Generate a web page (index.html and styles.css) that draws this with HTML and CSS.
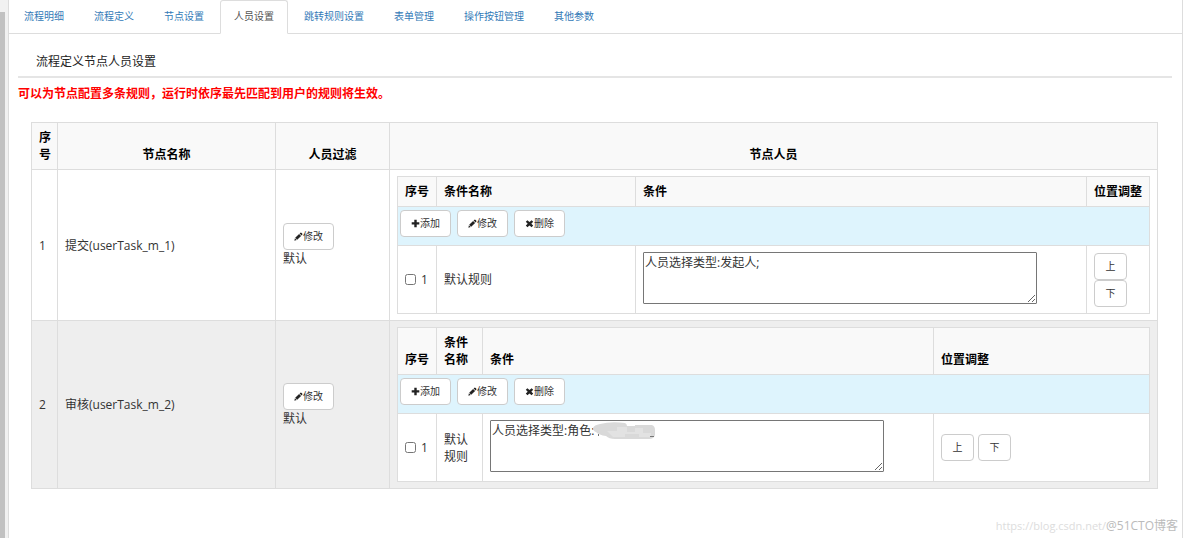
FILE: index.html
```html
<!DOCTYPE html>
<html lang="zh-CN">
<head>
<meta charset="utf-8">
<title>流程定义节点人员设置</title>
<link rel="stylesheet" href="styles.css">
</head>
<body>
<svg class="sprite" aria-hidden="true">
  <symbol id="i-plus" viewBox="0 0 9 9"><path d="M3.3.8h2.4v2.5h2.6v2.3H5.7v2.6H3.3V5.6H.7V3.3h2.6z"/></symbol>
  <symbol id="i-pencil" viewBox="0 0 9 9"><path d="M6.2.9q.7-.7 1.4 0l.6.6q.6.7 0 1.3l-.6.6-2-2zM5.1 1.9l2 2-3.9 3.9-2-2zM.9 6.3l1.8 1.8-2.3.6z"/></symbol>
  <symbol id="i-remove" viewBox="0 0 9 9"><path d="M2.4 1.2l2.1 1.800 2.1-1.800 1.600 1.600-1.900 1.900 1.900 1.900-1.600 1.600-2.100-1.800-2.100 1.800L.8 6.600l1.900-1.900L.8 2.800z"/></symbol>
</svg>
<div class="frame">
  <div class="gutter"><div class="thumb"></div></div>
  <div class="page">
    <nav class="tabs">
      <a class="tab" href="#">流程明细</a>
      <a class="tab" href="#">流程定义</a>
      <a class="tab" href="#">节点设置</a>
      <a class="tab active" href="#">人员设置</a>
      <a class="tab" href="#">跳转规则设置</a>
      <a class="tab" href="#">表单管理</a>
      <a class="tab" href="#">操作按钮管理</a>
      <a class="tab" href="#">其他参数</a>
    </nav>
    <main class="content">
      <h1 class="title">流程定义节点人员设置</h1>
      <p class="notice">可以为节点配置多条规则，运行时依序最先匹配到用户的规则将生效。</p>
      <div class="panel">
        <table class="grid nodes">
          <colgroup><col class="c-no"><col class="c-node"><col class="c-filter"><col></colgroup>
          <thead><tr><th>序号</th><th>节点名称</th><th>人员过滤</th><th>节点人员</th></tr></thead>
          <tbody>
            <tr>
              <td>1</td>
              <td>提交(userTask_m_1)</td>
              <td><button class="btn" type="button"><svg class="icon"><use href="#i-pencil"/></svg>修改</button><div>默认</div></td>
              <td>
                <table class="grid rules">
                  <colgroup><col class="c-check"><col class="c-name"><col><col class="c-move"></colgroup>
                  <thead><tr><th>序号</th><th>条件名称</th><th>条件</th><th>位置调整</th></tr></thead>
                  <tbody>
                    <tr><td class="toolbar" colspan="4"><div class="tools">
                      <button class="btn" type="button"><svg class="icon"><use href="#i-plus"/></svg>添加</button>
                      <button class="btn" type="button"><svg class="icon"><use href="#i-pencil"/></svg>修改</button>
                      <button class="btn" type="button"><svg class="icon"><use href="#i-remove"/></svg>删除</button>
                    </div></td></tr>
                    <tr>
                      <td><label class="pick"><input type="checkbox">1</label></td>
                      <td>默认规则</td>
                      <td><textarea class="rule" aria-label="条件">人员选择类型:发起人;</textarea></td>
                      <td><div class="moves"><button class="btn" type="button">上</button><button class="btn" type="button">下</button></div></td>
                    </tr>
                  </tbody>
                </table>
              </td>
            </tr>
            <tr class="alt">
              <td>2</td>
              <td>审核(userTask_m_2)</td>
              <td><button class="btn" type="button"><svg class="icon"><use href="#i-pencil"/></svg>修改</button><div>默认</div></td>
              <td>
                <table class="grid rules">
                  <colgroup><col class="c-check"><col class="c-name-slim"><col><col class="c-move-wide"></colgroup>
                  <thead><tr><th>序号</th><th>条件名称</th><th>条件</th><th>位置调整</th></tr></thead>
                  <tbody>
                    <tr><td class="toolbar" colspan="4"><div class="tools">
                      <button class="btn" type="button"><svg class="icon"><use href="#i-plus"/></svg>添加</button>
                      <button class="btn" type="button"><svg class="icon"><use href="#i-pencil"/></svg>修改</button>
                      <button class="btn" type="button"><svg class="icon"><use href="#i-remove"/></svg>删除</button>
                    </div></td></tr>
                    <tr>
                      <td><label class="pick"><input type="checkbox">1</label></td>
                      <td>默认规则</td>
                      <td><div class="masked"><textarea class="rule" aria-label="条件">人员选择类型:角色:</textarea>
                        <svg class="smudge" viewBox="0 0 64 20" aria-hidden="true"><path fill="#d9d9d9" d="M0 6Q1 3 7 2 18-1 32 1q2 1 2 3h8V3h17q3 1 3 5v5q-1 4-6 4H22q-6 0-9-3-7-1-10-4-3-1-3-4z"/><path fill="#e2e2e2" d="M14 9h10V5h10v5h8V6h8v5h8v4H46v-3H32v3H20z"/><path fill="#777" d="M5 12h1v2H5zM57 14h4v1h-4z"/></svg></div></td>
                      <td><div class="moves"><button class="btn" type="button">上</button><button class="btn" type="button">下</button></div></td>
                    </tr>
                  </tbody>
                </table>
              </td>
            </tr>
          </tbody>
        </table>
      </div>
    </main>
  </div>
</div>
<div class="watermark"><span class="source">https://blog.csdn.net/</span><span class="brand">@51CTO博客</span></div>
</body>
</html>
```

FILE: styles.css
```css
* { box-sizing: border-box; }
body {
  margin: 0;
  background: #fff;
  color: #333;
  font: 12px/17px "Open Sans", "Noto Sans CJK SC", sans-serif;
}
.sprite { display: none; }
.frame { display: flex; min-height: 100vh; }
.gutter {
  width: 9px;
  flex: none;
  padding-top: 12px;
  background: #f1f1f1;
  border-right: 1px solid #dcdcdc;
  display: flex;
}
.thumb { width: 5px; background: #c1c1c1; }
.page {
  flex: 1;
  min-width: 0;
  margin-right: 1px;
  border-right: 1px solid #ddd;
}

.tabs {
  display: flex;
  gap: 2px;
  height: 34px;
  padding-left: 1px;
  border-bottom: 1px solid #ddd;
}
.tab {
  height: 34px;
  padding: 8px 13px 0;
  border: 1px solid transparent;
  border-radius: 3px 3px 0 0;
  color: #337ab7;
  font-size: 10px;
  line-height: 15px;
  text-decoration: none;
  white-space: nowrap;
}
.tab.active { color: #555; background: #fff; border-color: #ddd #ddd #fff; }

.content { padding: 19px 10px 0 9px; }
.title {
  margin: 0;
  padding: 0 18px 6px;
  border-bottom: 2px solid #e5e5e5;
  color: #222;
  font-size: 12px;
  font-weight: 400;
}
.notice { margin: 0; padding-top: 7px; color: #f00; font-weight: 700; }
.panel { padding: 20px 14px 20px 13px; }

.grid { width: 100%; border-collapse: collapse; table-layout: fixed; background: #fff; }
.grid th, .grid td { padding: 6px 7px; border: 1px solid #ddd; }
.grid th { background: #f9f9f9; color: #000; font-weight: 700; text-align: left; vertical-align: bottom; }
.grid td { vertical-align: middle; }
.nodes > thead th { text-align: center; }
.nodes > tbody > .alt { background: #eee; }
.c-no { width: 26px; }
.c-node { width: 218px; }
.c-filter { width: 114px; }
.c-check { width: 39px; }
.c-name { width: 199px; }
.c-name-slim { width: 46px; }
.c-move { width: 63px; }
.c-move-wide { width: 216px; }
.grid .toolbar { padding: 3px 2px 8px; background: #def4fd; }
.tools { display: flex; gap: 6px; }

.btn {
  display: inline-flex;
  align-items: center;
  justify-content: center;
  height: 27px;
  padding: 0 10px;
  border: 1px solid #ccc;
  border-radius: 4px;
  background: #fff;
  color: #333;
  font: 10px/15px "Open Sans", "Noto Sans CJK SC", sans-serif;
  white-space: nowrap;
}
.icon { width: 9px; height: 9px; fill: #222; }
.nodes .btn { vertical-align: top; }
.moves { display: flex; flex-wrap: wrap; column-gap: 4px; }
.moves .btn { width: 33px; }

.pick { display: flex; align-items: center; gap: 5px; }
.pick input { width: 11px; height: 11px; margin: 0; }
.rule {
  display: block;
  width: 394px;
  max-width: 100%;
  height: 52px;
  margin: 0 0 3px;
  padding: 1px;
  border: 1px solid #767676;
  border-radius: 1px;
  color: #333;
  font: inherit;
}
.masked { position: relative; }
.smudge { position: absolute; left: 103px; top: 2px; width: 64px; height: 20px; }

.watermark {
  position: absolute;
  right: 6px;
  bottom: 4px;
  display: flex;
  color: #bbb;
}
.source { color: #ddd; font-size: 11px; }
```
